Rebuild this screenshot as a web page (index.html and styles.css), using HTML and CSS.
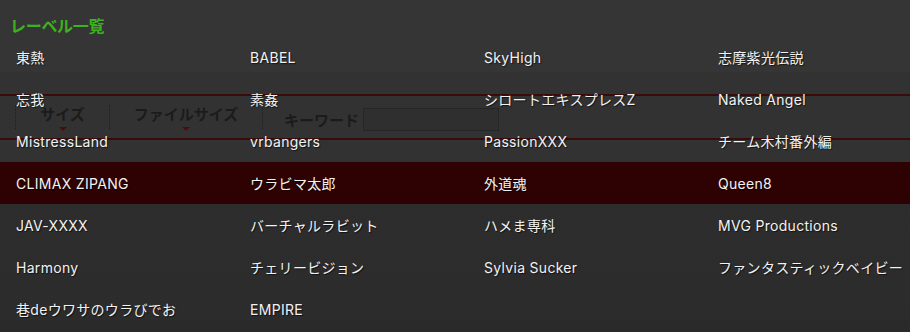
FILE: index.html
```html
<!DOCTYPE html>
<html lang="ja">
<head>
<meta charset="utf-8">
<title>レーベル一覧</title>
<link rel="stylesheet" href="styles.css">
</head>
<body>
<div class="page">
  <h2 class="title">レーベル一覧</h2>
  <div class="toolbar">
    <div class="sort sort-size"><span class="sort-label">サイズ</span><span class="caret"></span></div>
    <div class="sort sort-file"><span class="sort-label">ファイルサイズ</span><span class="caret"></span></div>
    <div class="keyword"><span class="kw-label">キーワード</span><span class="kw-input"></span></div>
  </div>
  <ul class="labels">
    <li class="row"><span>東熱</span><span>BABEL</span><span>SkyHigh</span><span>志摩紫光伝説</span></li>
    <li class="row"><span>忘我</span><span>素姦</span><span>シロートエキスプレスZ</span><span>Naked Angel</span></li>
    <li class="row"><span>MistressLand</span><span>vrbangers</span><span>PassionXXX</span><span>チーム木村番外編</span></li>
    <li class="row active"><span>CLIMAX ZIPANG</span><span>ウラビマ太郎</span><span>外道魂</span><span>Queen8</span></li>
    <li class="row"><span>JAV-XXXX</span><span>バーチャルラビット</span><span>ハメま専科</span><span>MVG Productions</span></li>
    <li class="row"><span>Harmony</span><span>チェリービジョン</span><span>Sylvia Sucker</span><span>ファンタスティックベイビー</span></li>
    <li class="row"><span>巷deウワサのウラびでお</span><span>EMPIRE</span><span></span><span></span></li>
  </ul>
</div>
</body>
</html>
```

FILE: styles.css
```css
html, body {
  margin: 0;
  padding: 0;
}
body {
  width: 910px;
  height: 332px;
  overflow: hidden;
  background: linear-gradient(to bottom,
    #353535 0px, #353535 72px,
    #323232 72px, #323232 204px,
    #2d2d2d 204px, #2c2c2c 320px,
    #2a2a2a 320px);
  font-family: "Noto Sans CJK JP", "Noto Sans", sans-serif;
  color: #f2f2f2;
}
.page {
  position: relative;
  width: 910px;
  height: 332px;
}
.title {
  margin: 0;
  height: 36px;
  box-sizing: border-box;
  padding: 14px 0 0 10px;
  font-size: 16px;
  line-height: 22px;
  font-weight: bold;
  color: #3cb21e;
  letter-spacing: -0.3px;
}
.toolbar {
  position: absolute;
  top: 94px;
  left: 0;
  width: 910px;
  height: 46px;
  box-sizing: border-box;
  border-top: 2px solid #3a0b0b;
  border-bottom: 2px solid #3a0b0b;
  display: flex;
  align-items: center;
  padding-left: 15px;
  z-index: 0;
}
.sort {
  position: relative;
  height: 24px;
  border-left: 1px dotted #1e1e1e;
  display: flex;
  justify-content: center;
  align-items: flex-start;
}
.sort-size { width: 93px; }
.sort-file {
  width: 152px;
  border-right: 1px dotted #1e1e1e;
}
.sort-label {
  font-size: 15px;
  font-weight: bold;
  line-height: 18px;
  color: #1b1b1b;
}
.caret {
  position: absolute;
  left: 50%;
  bottom: -2px;
  margin-left: -4px;
  width: 0;
  height: 0;
  border-left: 4px solid transparent;
  border-right: 4px solid transparent;
  border-top: 4px solid #4a0c0c;
}
.keyword {
  display: flex;
  align-items: center;
  margin-left: 21px;
  margin-top: 4px;
}
.kw-label {
  font-size: 15px;
  font-weight: bold;
  color: #1b1b1b;
  margin-right: 4px;
}
.kw-input {
  width: 136px;
  height: 23px;
  box-sizing: border-box;
  background: #2f2f2f;
  border: 1px solid #262626;
}
.labels {
  position: relative;
  z-index: 1;
  list-style: none;
  margin: 0;
  padding: 0;
}
.row {
  display: grid;
  grid-template-columns: repeat(4, 234px);
  height: 42px;
  line-height: 42px;
  font-family: "Inter", "Noto Sans CJK JP", sans-serif;
  font-size: 14px;
  letter-spacing: 0.3px;
  text-shadow: 1px 1px 1px rgba(0, 0, 0, 0.6);
}
.row span {
  padding: 1px 0 0 16px;
  white-space: nowrap;
}
.row.active {
  background: #2e0202;
}
```
